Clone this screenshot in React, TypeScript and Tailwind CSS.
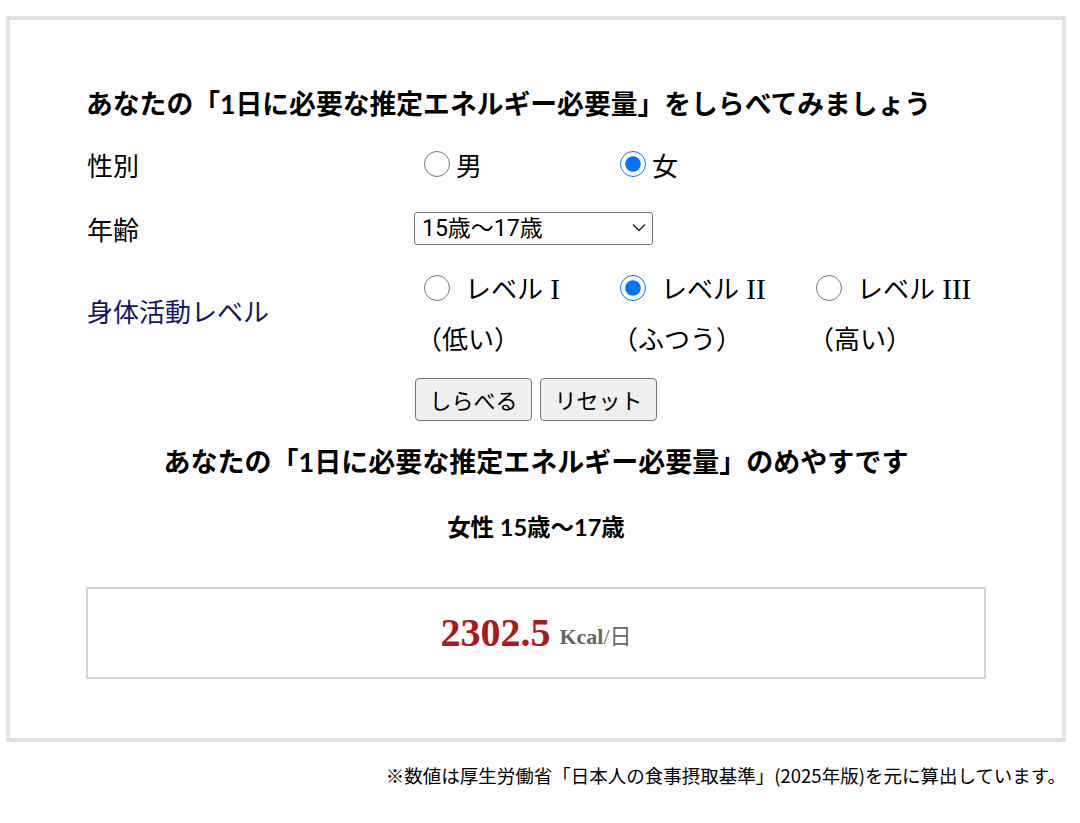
import { useState } from "react";

const jp = "font-['Noto_Sans_CJK_JP',sans-serif]";
const head = "font-['Lato','Noto_Sans_CJK_JP',sans-serif] font-bold";

const LEVELS = [
  { id: "1", label: "I", note: "（低い）" },
  { id: "2", label: "II", note: "（ふつう）" },
  { id: "3", label: "III", note: "（高い）" },
];

function Radio({ checked, onChange }: { checked: boolean; onChange: () => void }) {
  return (
    <input
      type="radio"
      checked={checked}
      onChange={onChange}
      className="m-0 ml-[10px] mr-[6px] h-[26px] w-[26px] shrink-0"
    />
  );
}

export default function App() {
  const [sex, setSex] = useState<"m" | "f">("f");
  const [level, setLevel] = useState("2");

  return (
    <div className={`min-h-[823px] bg-white text-black ${jp}`}>
      <div className="h-[16px]" />
      <div className="ml-[6px] w-[1060px] border-4 border-[#e0e0e0] px-[76px] pt-[66px] pb-[59px]">
        <h2 className={`${head} h-[36px] text-[26.8px] leading-[36px] whitespace-nowrap`}>
          あなたの「1日に必要な推定エネルギー必要量」をしらべてみましょう
        </h2>

        <div className="mt-[12px] grid grid-cols-[328px_196px_196px_196px] text-[26px]">
          <div className="flex h-[60px] items-center pl-[1px]">性別</div>
          <label className="flex h-[60px] items-center">
            <Radio checked={sex === "m"} onChange={() => setSex("m")} />
            男
          </label>
          <label className="col-span-2 flex h-[60px] items-center">
            <Radio checked={sex === "f"} onChange={() => setSex("f")} />
            女
          </label>

          <div className="mt-[14px] flex h-[40px] items-center pl-[1px]">年齢</div>
          <div className="relative col-span-3 mt-[14px] flex h-[40px] items-center">
            <select
              defaultValue="15-17"
              className="h-[33px] w-[239px] appearance-none rounded-[3px] border-[1.5px] border-[#767676] bg-white pl-[7px] font-['Roboto','Noto_Sans_CJK_JP',sans-serif] text-[23px] leading-none"
            >
              <option value="12-14">12歳〜14歳</option>
              <option value="15-17">15歳〜17歳</option>
              <option value="18-29">18歳〜29歳</option>
            </select>
            <svg
              className="pointer-events-none absolute left-[218px] top-[15px]"
              width="14"
              height="9"
              viewBox="0 0 14 9"
              fill="none"
              stroke="#222"
              strokeWidth="1.4"
            >
              <path d="M1 1.5l6 6 6-6" />
            </svg>
          </div>

          <div className="row-span-2 mt-[15px] flex items-center pb-[3px] pl-[1px] text-[#141466]">身体活動レベル</div>
          {LEVELS.map((l) => (
            <label key={l.id} className="mt-[15px] flex h-[50px] items-center">
              <Radio checked={level === l.id} onChange={() => setLevel(l.id)} />
              <span className="ml-[9px] mt-[3px] font-['Liberation_Serif','Noto_Sans_CJK_JP',serif] text-[29px]">
                <span className="font-['Noto_Sans_CJK_JP',sans-serif] text-[26px]">レベル</span> {l.label}
              </span>
            </label>
          ))}
          {LEVELS.map((l) => (
            <div key={l.id} className="flex h-[48px] items-center pl-[2px]">
              {l.note}
            </div>
          ))}

          <div className="col-span-3 col-start-2 mt-[17px] flex gap-[8px] pl-[1px]">
            <button className="h-[43px] w-[117px] rounded-[4px] border-[1.5px] border-[#767676] bg-[#efefef] text-[22px]">
              しらべる
            </button>
            <button className="h-[43px] w-[117px] rounded-[4px] border-[1.5px] border-[#767676] bg-[#efefef] text-[22px]">
              リセット
            </button>
          </div>
        </div>

        <h3 className={`${head} mt-[23px] h-[36px] text-center text-[27px] leading-[36px] whitespace-nowrap`}>
          あなたの「1日に必要な推定エネルギー必要量」のめやすです
        </h3>
        <p className={`${head} mt-[32px] h-[30px] text-center text-[23.5px] leading-[30px]`}>
          女性 15歳〜17歳
        </p>

        <div className="mt-[45px] flex h-[92px] items-center justify-center border-2 border-[#d4d4d4]">
          <span className="font-['Liberation_Serif',serif] text-[40px] font-bold text-[#b0161a]">2302.5</span>
          <span className="ml-[9px] mt-[6px] font-['Liberation_Serif','Noto_Sans_CJK_JP',serif] text-[22px] font-bold text-[#666]">
            Kcal<span className="font-normal">/日</span>
          </span>
        </div>
      </div>

      <p className="mt-[20px] pr-[14px] text-right text-[18.5px] leading-[26px]">
        ※数値は厚生労働省「日本人の食事摂取基準」(2025年版)を元に算出しています。
      </p>
    </div>
  );
}
